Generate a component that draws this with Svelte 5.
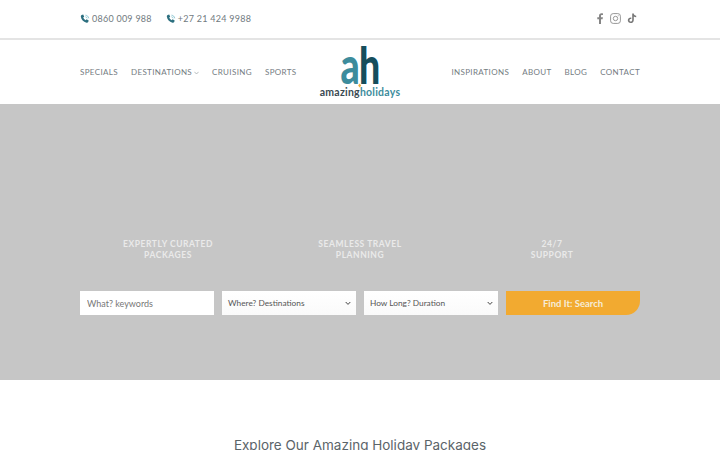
<script lang="ts">
  const leftNav = [
    { label: 'SPECIALS' },
    { label: 'DESTINATIONS', caret: true },
    { label: 'CRUISING' },
    { label: 'SPORTS' }
  ];
  const rightNav = ['INSPIRATIONS', 'ABOUT', 'BLOG', 'CONTACT'];
  const phones = ['0860 009 988', '+27 21 424 9988'];
  const features = [
    ['EXPERTLY CURATED', 'PACKAGES'],
    ['SEAMLESS TRAVEL', 'PLANNING'],
    ['24/7', 'SUPPORT']
  ];
  const selects = ['Where? Destinations', 'How Long? Duration'];
</script>

<div class="page">
  <div class="topbar">
    <div class="wrap topbar-in">
      <div class="phones">
        {#each phones as phone}
          <span class="phone">
            <svg width="10" height="10" viewBox="0 0 10 10">
              <path d="M1.6.9 3.2.5l1 2.2-1 .9c.4 1.1 1.2 2 2.4 2.6l1-.9 2.1 1.2-.5 1.6c-.3.6-1 .9-1.7.7C3.3 7.9 1.3 5.6.8 2.5.7 1.8 1 1.2 1.6.9Z" fill="#2c6f7f" />
              <path d="M5.5 1.2c1.7.1 3 1.4 3.2 3.1M5.5 2.8c.9.1 1.5.7 1.6 1.5" fill="none" stroke="#8cc6d2" stroke-width="1" />
            </svg>
            {phone}
          </span>
        {/each}
      </div>
      <div class="socials">
        <svg width="7" height="11" viewBox="0 0 7 11"><path d="M2 11V6.2H.3V4.3H2V2.900C2 1.200 3 .3 4.500.3c.7 0 1.300.1 1.500.1v1.700H5c-.8 0-1 .4-1 1v1.200h1.900l-.3 1.900H4V11H2Z" fill="#858585" /></svg>
        <svg width="11" height="11" viewBox="0 0 11 11" fill="none" stroke="#979797"><rect x=".6" y=".6" width="9.800" height="9.800" rx="2.600" /><circle cx="5.500" cy="5.500" r="2.200" /><circle cx="8.200" cy="2.800" r=".5" fill="#979797" stroke="none" /></svg>
        <svg width="10" height="11" viewBox="0 0 10 11"><path d="M5.200.4h1.600c.1 1.300.9 2.200 2.400 2.300v1.600c-.9 0-1.700-.3-2.400-.8v3.400c0 1.900-1.300 3.200-3.100 3.200C2 10.100.8 8.900.8 7.300c0-1.800 1.500-3.100 3.500-2.900v1.700c-1-.2-1.800.3-1.800 1.200 0 .7.600 1.300 1.300 1.300.9 0 1.400-.6 1.400-1.500V.4Z" fill="#777" /></svg>
      </div>
    </div>
  </div>

  <header class="header">
    <div class="wrap header-in">
      <nav class="nav">
        {#each leftNav as item}
          <span class="nav-item">
            {item.label}
            {#if item.caret}
              <svg class="caret" width="5" height="4" viewBox="0 0 5 4"><path d="M.4.8 2.500 3 4.600.8" fill="none" stroke="#9aa0a4" stroke-width=".7" /></svg>
            {/if}
          </span>
        {/each}
      </nav>
      <div class="logo">
        <div class="mark"><span class="mark-a">a</span><span class="mark-h">h</span><i class="spark"></i></div>
        <div class="wordmark">amazing<span>holidays</span></div>
      </div>
      <nav class="nav nav-right">
        {#each rightNav as label}
          <span class="nav-item">{label}</span>
        {/each}
      </nav>
    </div>
  </header>

  <section class="hero">
    <div class="wrap">
      <div class="features">
        {#each features as lines}
          <div class="feature">{lines[0]}<br />{lines[1]}</div>
        {/each}
      </div>
      <form class="search" on:submit|preventDefault>
        <input class="field" type="text" placeholder="What? keywords" />
        {#each selects as label}
          <div class="field select">
            <span>{label}</span>
            <svg width="6" height="5" viewBox="0 0 6 5"><path d="M.7 1 3 3.400 5.300 1" fill="none" stroke="#444" stroke-width="1" /></svg>
          </div>
        {/each}
        <button class="submit" type="submit">Find It: Search</button>
      </form>
    </div>
  </section>

  <section class="intro">
    <h2>Explore Our Amazing Holiday Packages</h2>
  </section>
</div>

<style>
  :global(body) { margin: 0; background: #fff; overflow: hidden; }
  .page { height: 450px; overflow: hidden; font-family: "Lato", "Inter", sans-serif; color: #6b7278; }
  .wrap { width: 560px; margin: 0 auto; }
  .topbar { height: 38px; border-bottom: 2px solid #e4e4e4; }
  .topbar-in { height: 37px; display: flex; justify-content: space-between; align-items: center; }
  .phones { display: flex; gap: 14px; }
  .phone { display: inline-flex; align-items: center; gap: 2px; font-size: 9px; letter-spacing: .25px; color: #717a80; }
  .socials { display: flex; align-items: center; gap: 6px; margin-right: 3px; }
  .header { height: 64px; }
  .header-in { height: 64px; display: grid; grid-template-columns: 1fr auto 1fr; align-items: center; }
  .nav { display: flex; gap: 13px; }
  .nav-right { justify-content: flex-end; }
  .nav-item { display: inline-flex; align-items: center; gap: 2px; font-size: 8px; letter-spacing: .36px; color: #747c82; }
  .caret { margin-top: 1px; }
  .logo { display: flex; flex-direction: column; align-items: center; }
  .mark { position: relative; height: 38px; display: flex; align-items: flex-end; font-family: "Lato", sans-serif; font-weight: 900; font-size: 52px; line-height: 41px; letter-spacing: -1px; transform: scaleX(.72); }
  .mark-a { color: #3d8c9c; }
  .mark-h { color: #164e5c; }
  .spark { position: absolute; left: 25px; bottom: -2px; width: 3px; height: 3px; background: #eeb040; transform: rotate(45deg); }
  .wordmark { margin-top: 2px; font-size: 10.500px; font-weight: 700; letter-spacing: .25px; line-height: 11px; color: #3a4a52; }
  .wordmark span { color: #3d8c9c; }
  .hero { height: 276px; background: #c6c6c6; }
  .features { display: grid; grid-template-columns: repeat(3, 1fr); gap: 16px; padding-top: 135px; }
  .feature { text-align: center; font-size: 8.500px; font-weight: 700; line-height: 11px; letter-spacing: .55px; color: #eaeaea; }
  .search { display: grid; grid-template-columns: repeat(4, 1fr); gap: 8px; margin-top: 30px; }
  .field { box-sizing: border-box; width: 100%; height: 24px; border: 0; border-radius: 0; background: #fff; font: inherit; font-size: 8.300px; color: #555; outline: none; }
  input.field { padding: 0 7px; font-size: 9px; }
  input.field::placeholder { color: #777; opacity: 1; }
  .select { display: flex; align-items: center; justify-content: space-between; padding: 0 5px 0 6px; background: linear-gradient(#fff, #fafafa); }
  .submit { height: 24px; border: 0; padding: 0; border-radius: 0 0 14px 0; background: #f2aa30; color: #f6ecd8; font: inherit; font-size: 9.500px; font-weight: 700; }
  .intro { padding-top: 55px; text-align: center; }
  h2 { margin: 0; font-family: "Inter", sans-serif; font-size: 13.500px; font-weight: 400; line-height: 20px; color: #5b6469; }
</style>
